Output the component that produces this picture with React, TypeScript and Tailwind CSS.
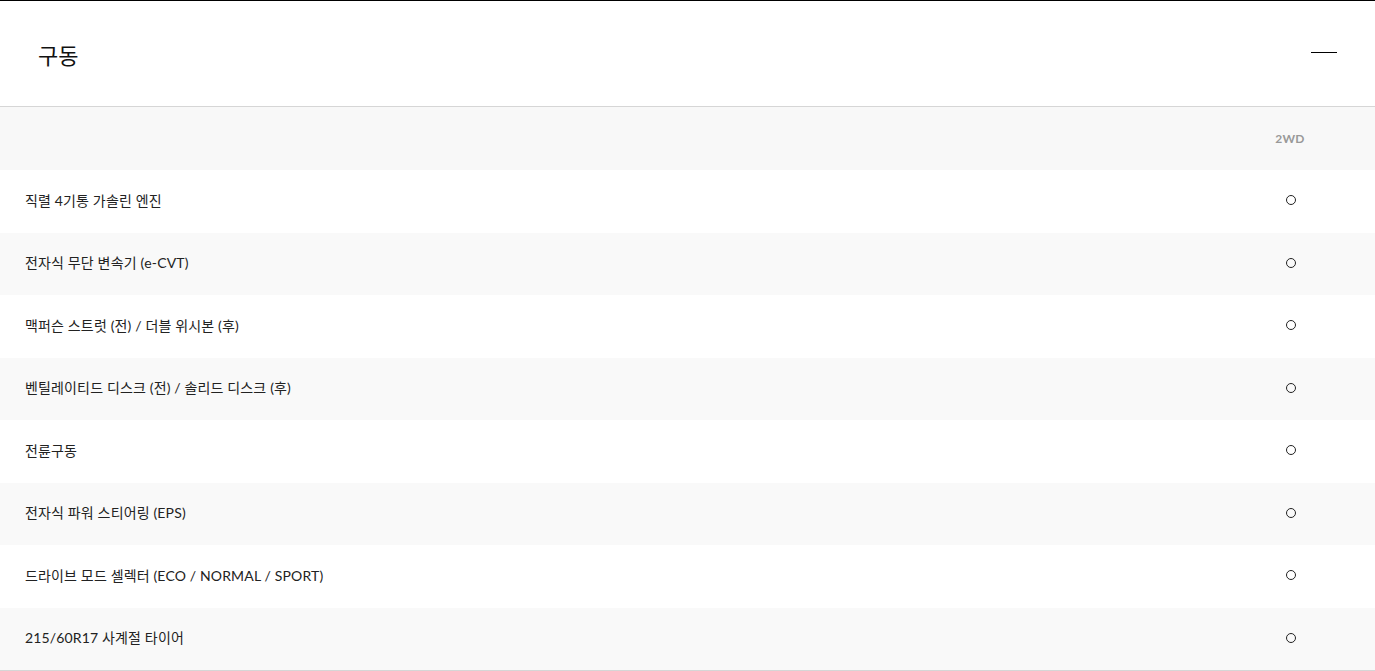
import React from "react";

const rows = [
  "직렬 4기통 가솔린 엔진",
  "전자식 무단 변속기 (e-CVT)",
  "맥퍼슨 스트럿 (전) / 더블 위시본 (후)",
  "벤틸레이티드 디스크 (전) / 솔리드 디스크 (후)",
  "전륜구동",
  "전자식 파워 스티어링 (EPS)",
  "드라이브 모드 셀렉터 (ECO / NORMAL / SPORT)",
  "215/60R17 사계절 타이어",
];

export default function App() {
  return (
    <div
      className="w-[1375px] h-[671px] bg-white overflow-hidden border-t border-black"
      style={{ fontFamily: '"Lato", "Noto Sans CJK KR", sans-serif' }}
    >
      <div className="h-[106px] flex items-center justify-between pl-[38px] pr-[38px] border-b border-[#d6d6d6]">
        <h2 className="text-[22px] text-[#111] leading-none" style={{ fontFamily: '"Noto Sans CJK KR", sans-serif' }}>구동</h2>
        <div className="w-[26px] h-px bg-black -mt-[2px]" />
      </div>
      <div className="h-[63px] bg-[#f8f8f8] flex items-center">
        <div className="flex-1" />
        <div className="w-[170px] text-center text-[12px] font-bold text-[#999] tracking-wide">2WD</div>
      </div>
      {rows.map((r, i) => (
        <div
          key={i}
          className={`h-[62.5px] flex items-center pb-[2px] ${i % 2 === 1 ? "bg-[#f9f9f9]" : "bg-white"}`}
        >
          <div className="flex-1 pl-[25px] text-[14px] text-[#222] tracking-[0.15px]">{r}</div>
          <div className="w-[170px] flex justify-center">
            <div className="w-[10px] h-[10px] rounded-full border border-[#222] ml-[2px]" />
          </div>
        </div>
      ))}
      <div className="h-px bg-[#d6d6d6]" />
    </div>
  );
}
